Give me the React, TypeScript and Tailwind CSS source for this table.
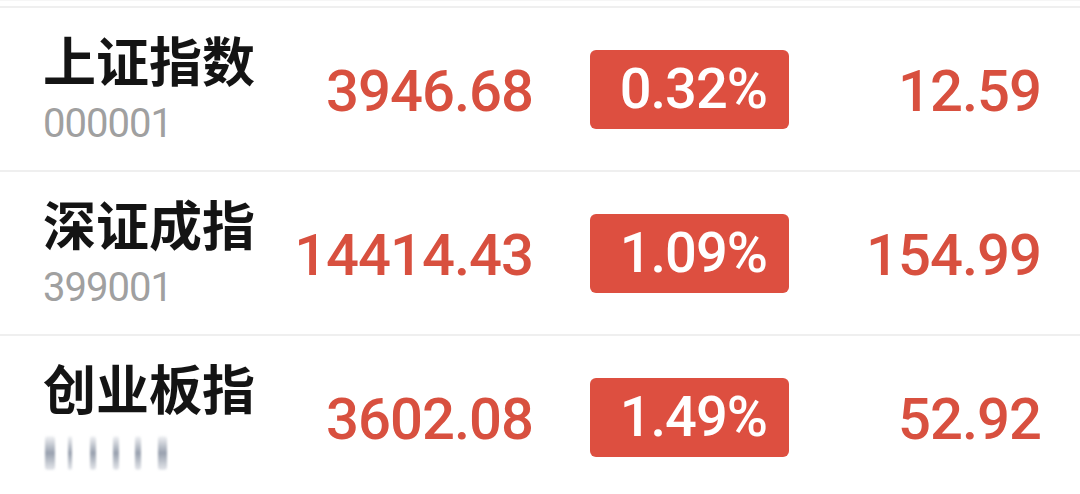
import React from "react";

const rows = [
  { name: "上证指数", code: "000001", price: "3946.68", pct: "0.32%", chg: "12.59", blur: false },
  { name: "深证成指", code: "399001", price: "14414.43", pct: "1.09%", chg: "154.99", blur: false },
  { name: "创业板指", code: "399006", price: "3602.08", pct: "1.49%", chg: "52.92", blur: true },
];

const num = { fontFamily: "Roboto, 'Liberation Sans', sans-serif" };
const cjk = { fontFamily: "'Noto Sans CJK SC', 'Noto Sans', sans-serif" };

function BlurCode() {
  return (
    <div className="flex h-[36px] items-center pl-[2px]">
      {[10, 4, 6, 6, 6, 9].map((w, i) => (
        <div key={i} className="flex w-[22.6px] justify-start">
          <div
            className="h-[34px] rounded-[3px] bg-gradient-to-b from-gray-100 via-gray-400 to-gray-200 blur-[1.2px]"
            style={{ width: w }}
          />
        </div>
      ))}
    </div>
  );
}

export default function App() {
  return (
    <div className="h-[494px] w-[1080px] overflow-hidden bg-white">
      <div className="h-[6px] border-t border-[#f6f6f6]" />
      {rows.map((r) => (
        <div
          key={r.code}
          className="flex h-[164px] items-center border-t-2 border-[#efefef] pl-[43px] pr-[39px]"
        >
          <div className="flex w-[230px] flex-col pb-[3px]">
            <div className="text-[53px] font-bold leading-[50px] text-[#141414]" style={cjk}>
              {r.name}
            </div>
            <div className="mt-[23px] h-[34px]">
              {r.blur ? (
                <BlurCode />
              ) : (
                <div className="text-[40px] leading-[34px] tracking-[-1px] text-[#a0a0a0]" style={num}>
                  {r.code}
                </div>
              )}
            </div>
          </div>
          <div
            className="mt-[4px] w-[260px] text-right text-[58px] font-medium leading-none tracking-[-1px] text-[#d8503f]"
            style={num}
          >
            {r.price}
          </div>
          <div className="ml-[57px] flex h-[79px] w-[199px] items-center justify-end rounded-[6px] bg-[#dd4f40] pr-[22px]">
            <span className="text-[56px] font-medium leading-none tracking-[-1px] text-white" style={num}>
              {r.pct}
            </span>
          </div>
          <div
            className="mt-[4px] flex-1 text-right text-[58px] font-medium leading-none tracking-[-1px] text-[#d8503f]"
            style={num}
          >
            {r.chg}
          </div>
        </div>
      ))}
    </div>
  );
}
